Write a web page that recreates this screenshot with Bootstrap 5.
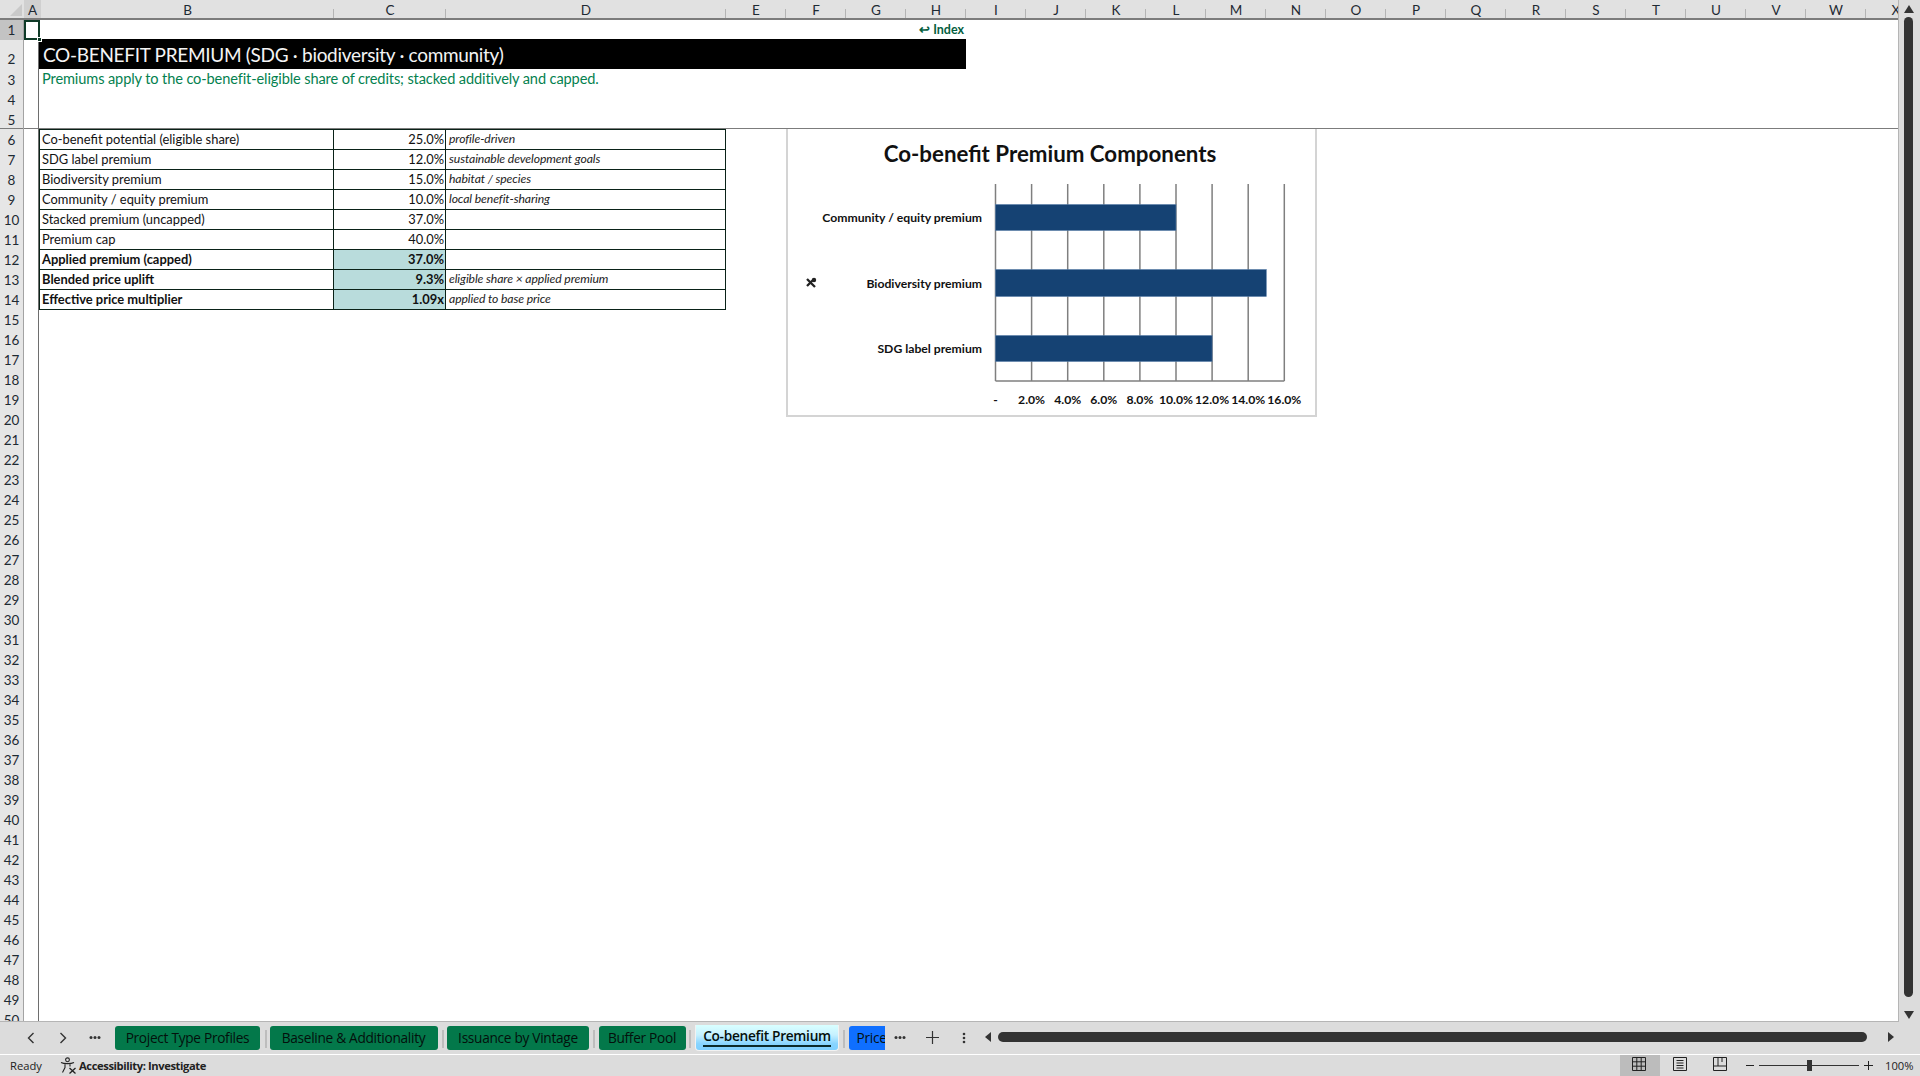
<!DOCTYPE html>
<html lang="en">
<head>
  <meta charset="UTF-8" />
  <title>Co-benefit Premium</title>
  <link href="https://cdn.jsdelivr.net/npm/bootstrap@5.3.3/dist/css/bootstrap.min.css" rel="stylesheet">
  <style>
    html, body { height: 100%; }
    body { background: #fff; color: #111; font-family: "Lato", "Liberation Sans", sans-serif; overflow: hidden; }
    .xl-app { height: 1076px; width: 1920px; }
    .xl-main { height: 1022px; }
    .xl-grid { width: 1899px; border-right: 1px solid #b5b5b5; border-bottom: 1px solid #b5b5b5; }

    .col-heads { height: 20px; background: #e1e1e1; border-bottom: 2px solid #7c7c7c; flex: none; }
    .col-head { height: 18px; font-size: 13.5px; line-height: 21px; text-align: center; color: #1e2a33; position: relative; flex: none; }
    .col-head::after { content: ""; position: absolute; right: 0; bottom: 0; height: 9px; width: 1px; background: #b4b4b4; }
    .col-corner { width: 24px; background: #e1e1e1; position: relative; flex: none; }
    .col-corner::after { content: ""; position: absolute; right: 2px; bottom: 2px; border-style: solid; border-width: 0 0 12px 12px; border-color: transparent transparent #c9c9c9 transparent; }
    .col-a { width: 17px; background: #d0d0d0; }
    .col-a::after { display: none; }
    .col-b { width: 293px; }
    .col-c { width: 112px; }
    .col-d { width: 280px; }
    .col-n { width: 60px; }

    .row-heads { width: 24px; background: #e6e6e6; border-right: 1px solid #a3a3a3; flex: none; }
    .row-head { height: 20px; font-size: 13.5px; line-height: 20px; text-align: center; color: #1e2a33; }
    .row-head.tall { height: 30px; line-height: 38px; }
    .row-head.on { background: #c3c3c3; }
    .row-head.freeze { background: linear-gradient(to bottom, #e6e6e6 18px, #7c7c7c 18px, #7c7c7c 19px, #e6e6e6 19px); }

    .spare-col { width: 15px; border-right: 1px solid #6e6e6e; flex: none; }
    .spare-cell { height: 109px; border-bottom: 1px solid #7c7c7c; }
    .sheet-top { height: 109px; border-bottom: 1px solid #7c7c7c; }
    .index-row { width: 927px; height: 19px; font-size: 12.5px; font-weight: 700; line-height: 20px; color: #04603f; padding-right: 2px; }
    .title-bar { width: 927px; height: 30px; background: #000; color: #f4f4f4; font-size: 19px; letter-spacing: -.31px; line-height: 31px; padding-left: 4px; }
    .sub-line { height: 20px; font-size: 14.6px; letter-spacing: -.12px; line-height: 20px; color: #04814f; padding-left: 3px; }

    .xl-table { width: 686px; table-layout: fixed; font-size: 12.9px; border-collapse: collapse; margin: 0; --bs-table-bg: transparent; }
    .xl-table td { height: 20px; padding: 0 1px 0 2px; line-height: 18px; border: 1.5px solid #0a2218; color: #111; white-space: nowrap; overflow: hidden; }
    .xl-table tr:first-child td { border-top-width: 1px; }
    .xl-table .val { text-align: right; }
    .xl-table .hot { background: #b9dcdc; font-weight: 700; }
    .xl-table .note { font-style: italic; font-size: 12.2px; letter-spacing: -.1px; padding-left: 3px; color: #222; }

    .chart-box { position: absolute; left: 786px; top: 129px; width: 531px; height: 288px; background: #fff; border: 2px solid #d4d4d4; border-top: 0; }
    .chart-box text { font-family: "Lato", sans-serif; fill: #111; font-weight: 700; }
    .chart-box .chart-title { font-size: 22.3px; }
    .chart-box .chart-lbl { font-size: 12.2px; }
    .cell-cursor { position: absolute; left: 24px; top: 20px; width: 16px; height: 20px; border: 2px solid #0f3b28; }
    .cell-cursor::after { content: ""; position: absolute; right: -4px; bottom: -4px; width: 5px; height: 5px; background: #0f3b28; border: 1px solid #fff; }

    .v-scroll { width: 21px; background: #dcdcdc; position: relative; flex: none; }
    .v-thumb { position: absolute; left: 5px; top: 17px; width: 9px; height: 980px; border-radius: 5px; background: #333; }
    .v-arrow { position: absolute; left: 4px; }

    .tab-bar { height: 32px; background: #dcdcdc; flex: none; position: relative; }
    .tab-nav { width: 115px; flex: none; }
    .tab-nav svg { position: absolute; top: 10px; }
    .sheet-tab { height: 24px; margin-top: 4px; margin-right: 9.5px; border-radius: 3px; background: #03784a; color: #04100c; font-family: "Open Sans", sans-serif; font-size: 13.7px; font-weight: 500; line-height: 24px; text-align: center; white-space: nowrap; overflow: hidden; flex: none; position: relative; letter-spacing: -.3px; }
    .tab-sep { position: absolute; top: 8px; width: 2px; height: 18px; background: #bdbdbd; }
    .tab-one { width: 145px; }
    .tab-two { width: 168px; }
    .tab-three { width: 142px; }
    .tab-four { width: 87px; }
    .tab-now { width: 144px; height: 26px; margin-top: 3px; border: 1px solid #f2f2f2; border-top: 0; font-weight: 600; line-height: 22px; background: linear-gradient(#d9ffff 0%, #c6f1ff 40%, #88d4ff 75%, #7fd0ff 100%); border-radius: 0 0 4px 4px; }
    .tab-now::after { content: ""; position: absolute; left: 7px; right: 7px; bottom: 3px; height: 2px; background: #0b2a2a; }
    .tab-price { width: 36px; background: #0f6fff; border-radius: 3px 0 0 3px; text-align: left; padding-left: 8px; }
    .h-thumb { position: absolute; left: 998px; top: 10px; width: 869px; height: 10px; border-radius: 5px; background: #333; }
    .tab-ctl { position: absolute; }

    .status-bar { height: 22px; background: #dcdcdc; border-top: 1px solid #fff; flex: none; font-family: "Open Sans", sans-serif; font-size: 11.2px; line-height: 21px; color: #222; position: relative; }
    .status-bar b { font-weight: 700; letter-spacing: -.4px; }
    .view-on { position: absolute; left: 1620px; top: 0; width: 40px; height: 21px; background: #bcbcbc; }
    .st-icon { position: absolute; top: 2px; }
    .zoom-line { position: absolute; left: 1759px; top: 10px; width: 100px; height: 1px; background: #333; }
    .zoom-knob { position: absolute; left: 1807px; top: 5px; width: 5px; height: 11px; background: #333; }
    .zoom-txt { position: absolute; }
  </style>
</head>
<body>
  <div class="xl-app d-flex flex-column">
    <div class="xl-main d-flex">
      <div class="xl-grid d-flex flex-column position-relative overflow-hidden">
        <div class="col-heads d-flex" id="colHeads">
          <div class="col-corner"></div>
          <div class="col-head col-a">A</div>
          <div class="col-head col-b">B</div>
          <div class="col-head col-c">C</div>
          <div class="col-head col-d">D</div>
        </div>
        <div class="d-flex flex-grow-1 overflow-hidden">
          <div class="row-heads" id="rowHeads"></div>
          <div class="spare-col"><div class="spare-cell"></div></div>
          <div class="flex-grow-1">
            <div class="sheet-top">
              <div class="index-row text-end">↩ Index</div>
              <div class="title-bar">CO-BENEFIT PREMIUM (SDG · biodiversity · community)</div>
              <div class="sub-line">Premiums apply to the co-benefit-eligible share of credits; stacked additively and capped.</div>
            </div>
            <table class="table xl-table">
              <colgroup><col style="width:294px"><col style="width:112px"><col style="width:280px"></colgroup>
              <tbody>
                <tr><td>Co-benefit potential (eligible share)</td><td class="val">25.0%</td><td class="note">profile-driven</td></tr>
                <tr><td>SDG label premium</td><td class="val">12.0%</td><td class="note">sustainable development goals</td></tr>
                <tr><td>Biodiversity premium</td><td class="val">15.0%</td><td class="note">habitat / species</td></tr>
                <tr><td>Community / equity premium</td><td class="val">10.0%</td><td class="note">local benefit-sharing</td></tr>
                <tr><td>Stacked premium (uncapped)</td><td class="val">37.0%</td><td class="note"></td></tr>
                <tr><td>Premium cap</td><td class="val">40.0%</td><td class="note"></td></tr>
                <tr><td class="fw-bold">Applied premium (capped)</td><td class="val hot">37.0%</td><td class="note"></td></tr>
                <tr><td class="fw-bold">Blended price uplift</td><td class="val hot">9.3%</td><td class="note">eligible share × applied premium</td></tr>
                <tr><td class="fw-bold">Effective price multiplier</td><td class="val hot">1.09x</td><td class="note">applied to base price</td></tr>
              </tbody>
            </table>
          </div>
        </div>

        <div class="cell-cursor"></div>

        <div class="chart-box">
          <svg width="527" height="286" viewBox="2 0 527 286">
            <text class="chart-title" x="264" y="33" text-anchor="middle">Co-benefit Premium Components</text>
            <g stroke="#7f7f7f" stroke-width="1.5">
              <line x1="209.5" y1="55" x2="209.5" y2="252"/><line x1="245.6" y1="55" x2="245.6" y2="252"/>
              <line x1="281.7" y1="55" x2="281.7" y2="252"/><line x1="317.8" y1="55" x2="317.8" y2="252"/>
              <line x1="353.9" y1="55" x2="353.9" y2="252"/><line x1="390" y1="55" x2="390" y2="252"/>
              <line x1="426.1" y1="55" x2="426.1" y2="252"/><line x1="462.2" y1="55" x2="462.2" y2="252"/>
              <line x1="498.3" y1="55" x2="498.3" y2="252"/><line x1="209.5" y1="252" x2="498.3" y2="252"/>
            </g>
            <g fill="#154273" stroke="#5b7fa8" stroke-width=".6">
              <rect x="209.5" y="75.5" width="180.5" height="26"/>
              <rect x="209.5" y="140.5" width="270.8" height="27"/>
              <rect x="209.5" y="206.5" width="216.6" height="26"/>
            </g>
            <g class="chart-lbl" text-anchor="end">
              <text class="chart-lbl" x="196" y="93">Community / equity premium</text>
              <text class="chart-lbl" x="196" y="159">Biodiversity premium</text>
              <text class="chart-lbl" x="196" y="224">SDG label premium</text>
            </g>
            <g text-anchor="middle">
              <text class="chart-lbl" x="209.5" y="275">-</text><text class="chart-lbl" x="245.6" y="275">2.0%</text>
              <text class="chart-lbl" x="281.7" y="275">4.0%</text><text class="chart-lbl" x="317.8" y="275">6.0%</text>
              <text class="chart-lbl" x="353.9" y="275">8.0%</text><text class="chart-lbl" x="390" y="275">10.0%</text>
              <text class="chart-lbl" x="426.1" y="275">12.0%</text><text class="chart-lbl" x="462.2" y="275">14.0%</text>
              <text class="chart-lbl" x="498.3" y="275">16.0%</text>
            </g>
            <g transform="translate(25 154)" fill="#222" stroke="#222">
              <path d="M-4 -4 L4 4 M-4 3 L3 -4" stroke-width="2.3"/>
              <circle cx="3" cy="-3" r="2.2" stroke="none"/>
            </g>
          </svg>
        </div>
      </div>
      <div class="v-scroll">
        <svg class="v-arrow" style="top:5px" width="12" height="8"><path d="M6 0 L11 8 H1 Z" fill="#333"/></svg>
        <div class="v-thumb"></div>
        <svg class="v-arrow" style="top:1011px" width="12" height="8"><path d="M1 0 H11 L6 8 Z" fill="#333"/></svg>
      </div>
    </div>

    <div class="tab-bar d-flex">
      <div class="tab-nav">
        <svg style="left:27px" width="8" height="12"><path d="M6.5 1 L1.5 6 L6.5 11" fill="none" stroke="#333" stroke-width="1.4"/></svg>
        <svg style="left:59px" width="8" height="12"><path d="M1.5 1 L6.5 6 L1.5 11" fill="none" stroke="#333" stroke-width="1.4"/></svg>
        <svg style="left:89px;top:13px" width="12" height="5"><circle cx="2" cy="2.5" r="1.5" fill="#333"/><circle cx="6" cy="2.5" r="1.5" fill="#333"/><circle cx="10" cy="2.5" r="1.5" fill="#333"/></svg>
      </div>
      <div class="sheet-tab tab-one">Project Type Profiles</div>
      <div class="sheet-tab tab-two">Baseline &amp; Additionality</div>
      <div class="sheet-tab tab-three">Issuance by Vintage</div>
      <div class="sheet-tab tab-four">Buffer Pool</div>
      <div class="sheet-tab tab-now">Co-benefit Premium</div>
      <div class="sheet-tab tab-price">Price</div>
      <div class="tab-sep" style="left:265px"></div>
      <div class="tab-sep" style="left:442px"></div>
      <div class="tab-sep" style="left:593px"></div>
      <div class="tab-sep" style="left:689px"></div>
      <div class="tab-sep" style="left:843px"></div>
      <svg class="tab-ctl" style="left:894px;top:13px" width="12" height="5"><circle cx="2" cy="2.5" r="1.5" fill="#333"/><circle cx="6" cy="2.5" r="1.5" fill="#333"/><circle cx="10" cy="2.5" r="1.5" fill="#333"/></svg>
      <svg class="tab-ctl" style="left:926px;top:9px" width="13" height="13"><path d="M6.5 0 V13 M0 6.5 H13" stroke="#333" stroke-width="1.2"/></svg>
      <svg class="tab-ctl" style="left:962px;top:10px" width="4" height="12"><circle cx="2" cy="2" r="1.3" fill="#333"/><circle cx="2" cy="6" r="1.3" fill="#333"/><circle cx="2" cy="10" r="1.3" fill="#333"/></svg>
      <svg class="tab-ctl" style="left:984px;top:9px" width="8" height="12"><path d="M7 1 V11 L1 6 Z" fill="#333"/></svg>
      <div class="h-thumb"></div>
      <svg class="tab-ctl" style="left:1887px;top:9px" width="8" height="12"><path d="M1 1 V11 L7 6 Z" fill="#333"/></svg>
    </div>

    <div class="status-bar">
      <span class="zoom-txt" style="left:10px">Ready</span>
      <svg class="st-icon" style="left:60px" width="17" height="17" viewBox="0 0 17 17" fill="none" stroke="#222" stroke-width="1.1">
        <circle cx="7.5" cy="2.8" r="1.9"/>
        <path d="M1 5.5 C4 7 11 7 14 5.5 M5 7 V10.5 L2.5 15.5 M10 7 V9.5"/>
        <path d="M9.5 11 L15.5 16.5 M15.5 11 L9.5 16.5" stroke-width="1.3"/>
      </svg>
      <b class="zoom-txt" style="left:79px">Accessibility: Investigate</b>
      <div class="view-on"></div>
      <svg class="st-icon" style="left:1632px" width="14" height="14" fill="none" stroke="#222"><path d="M.5 .5 H13.5 V13.5 H.5 Z M.5 4.8 H13.5 M.5 9.2 H13.5 M4.8 .5 V13.5 M9.2 .5 V13.5"/></svg>
      <svg class="st-icon" style="left:1673px" width="14" height="14" fill="none" stroke="#222"><path d="M.5 .5 H13.5 V13.5 H.5 Z M3.5 3.5 H10.5 M3.5 6 H10.5 M3.5 8.5 H10.5 M3.5 11 H10.5"/></svg>
      <svg class="st-icon" style="left:1713px" width="14" height="14" fill="none" stroke="#222"><path d="M.5 .5 H13.5 V13.5 H.5 Z M.5 9 H13.5 M5 .5 V9 M9 .5 V5"/></svg>
      <svg class="st-icon" style="left:1746px;top:10px" width="8" height="1"><path d="M0 .5 H8" stroke="#222"/></svg>
      <div class="zoom-line"></div>
      <div class="zoom-knob"></div>
      <svg class="st-icon" style="left:1864px;top:6px" width="9" height="9"><path d="M4.5 0 V9 M0 4.5 H9" stroke="#222"/></svg>
      <span class="zoom-txt" style="left:1885px">100%</span>
    </div>
  </div>

  <script src="https://cdn.jsdelivr.net/npm/bootstrap@5.3.3/dist/js/bootstrap.bundle.min.js"></script>
  <script>
    // column letters E..X
    const colHeads = document.getElementById("colHeads");
    "EFGHIJKLMNOPQRSTUVWX".split("").forEach(ch => {
      const d = document.createElement("div");
      d.className = "col-head col-n";
      d.textContent = ch;
      colHeads.appendChild(d);
    });
    // row numbers 1..50
    const rowHeads = document.getElementById("rowHeads");
    for (let i = 1; i <= 50; i++) {
      const d = document.createElement("div");
      d.className = "row-head" + (i === 1 ? " on" : "") + (i === 2 ? " tall" : "") + (i === 5 ? " freeze" : "");
      d.textContent = i;
      rowHeads.appendChild(d);
    }
  </script>
</body>
</html>
